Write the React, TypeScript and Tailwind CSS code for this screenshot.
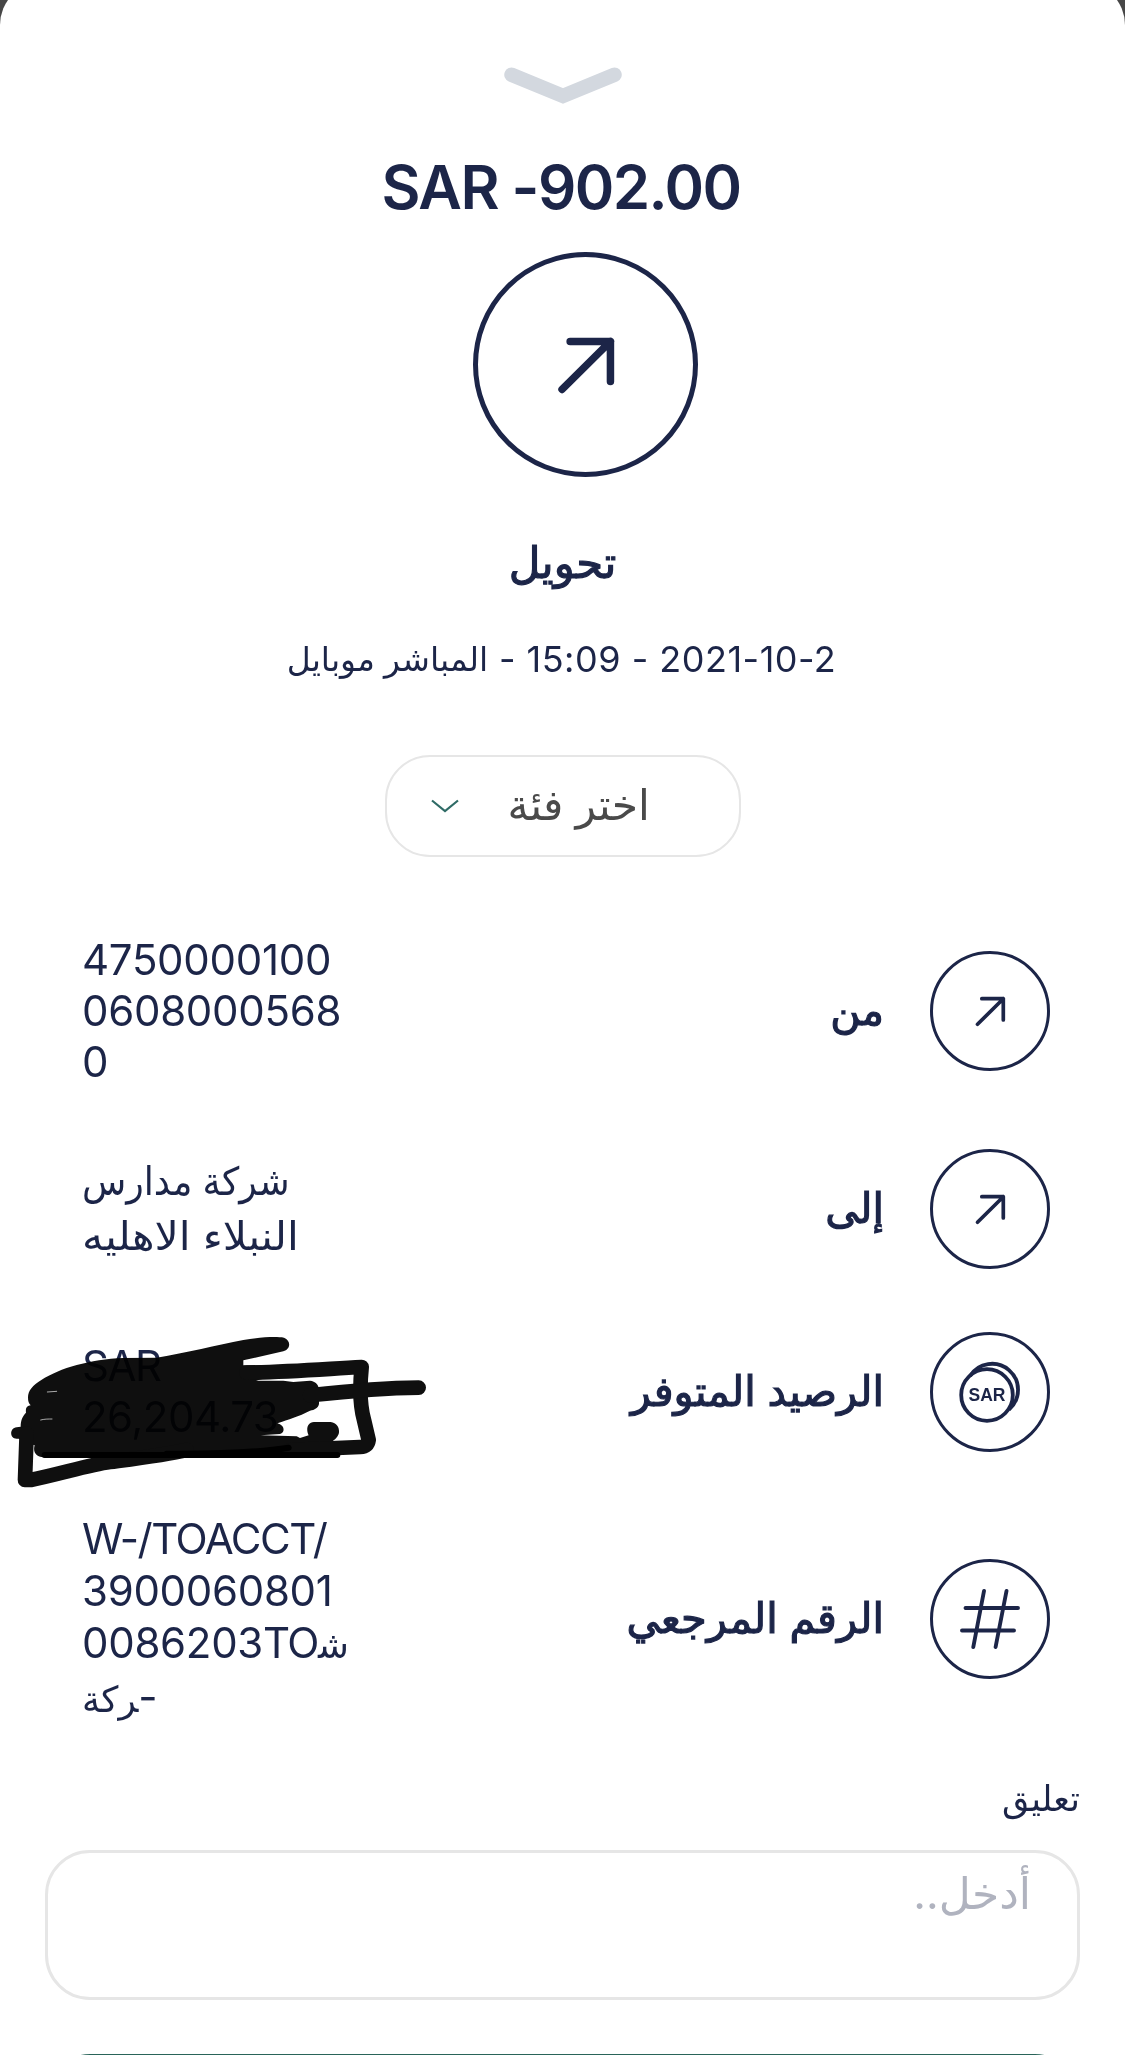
import type { ReactNode } from 'react';

function ArrowUpRight({ className, strokeWidth }: { className: string; strokeWidth: number }) {
  return (
    <svg
      className={className}
      viewBox="0 0 120 120"
      fill="none"
      stroke="currentColor"
      strokeWidth={strokeWidth}
      strokeLinecap="round"
      strokeLinejoin="round"
    >
      <path d="M47.500 73.300 73.300 47.700M51.800 47.700H73.300V69" />
    </svg>
  );
}

function CoinsIcon() {
  return (
    <svg className="size-[120px] shrink-0" viewBox="0 0 120 120" fill="none" stroke="currentColor" strokeWidth="3.8">
      <circle cx="57" cy="63" r="25.800" />
      <path d="M40 44A26 26 0 1 1 79 77.500" />
      <text
        x="57"
        y="69"
        textAnchor="middle"
        fill="currentColor"
        stroke="none"
        className="font-['Liberation_Sans'] text-[17.5px] font-bold"
      >
        SAR
      </text>
    </svg>
  );
}

function HashIcon() {
  return (
    <svg
      className="size-[120px] shrink-0"
      viewBox="0 0 120 120"
      fill="none"
      stroke="currentColor"
      strokeWidth="3.9"
      strokeLinecap="round"
    >
      <path d="M54 32 43.300 88M76.500 32 65.600 88M35.500 49H88M32 71.500H84" />
    </svg>
  );
}

// Pen strokes drawn over the balance
function Scribble() {
  return (
    <svg
      className="absolute top-[-12px] left-0 h-[180px] w-[450px]"
      viewBox="0 0 1350 540"
      fill="none"
      stroke="#0f0f0f"
      strokeWidth="44"
      strokeLinecap="round"
      strokeLinejoin="round"
    >
      <path
        fill="#0f0f0f"
        stroke="none"
        d="M84 232C84 212 98 196 124 180C180 144 270 118 370 114L470 113C560 98 650 76 730 60C790 50 830 50 852 53C874 62 872 88 850 94L730 121V136L940 134L768 182H850L880 186L930 182C946 184 956 192 957 210V252C954 264 944 270 930 272C896 290 866 298 832 310C852 314 858 336 840 342L782 346L890 349L900 354L926 346C918 330 920 308 942 306H992C1014 308 1020 330 1016 342C1012 352 1006 358 1000 361V390L560 412L300 412H130C108 410 98 396 104 376L98 374L56 356H50C28 356 28 324 50 322L62 320C62 300 68 288 78 278C76 262 82 258 92 256C86 250 84 244 84 232Z"
      />
      <path d="M740 158C860 156 960 148 1085 141C1080 190 1078 250 1092 300L1106 360C1104 374 1096 380 1080 381L870 390" />
      <path d="M930 226C1040 214 1140 204 1256 203" />
      <path d="M80 340 75 480H92C180 462 270 434 330 426C420 414 500 404 560 390" />
      <path stroke="#000" strokeWidth="18" d="M134 405H1012M500 401C620 402 760 400 866 383" />
      <path stroke="#aaa" strokeWidth="3" d="M142 216 170 214M122 300C132 297 144 297 156 297" />
    </svg>
  );
}

interface DetailRowProps {
  icon: ReactNode;
  label: string;
  className: string;
  children: ReactNode;
}

function DetailRow({ icon, label, className, children }: DetailRowProps) {
  return (
    <div className={`relative flex shrink-0 items-center justify-between pr-[75px] pl-[82px] ${className}`}>
      {children}
      <div className="flex items-center gap-[46px]">
        <span
          dir="rtl"
          className="pb-[2px] text-[41.5px] leading-[60px] whitespace-nowrap [-webkit-text-stroke:1.2px_currentColor]"
        >
          {label}
        </span>
        <span className="flex size-[120px] items-center justify-center rounded-full border-[3px] border-[#1c2548]">
          {icon}
        </span>
      </div>
    </div>
  );
}

export default function App() {
  return (
    <div className="h-[2055px] w-[1125px] overflow-hidden bg-[#474747] font-['Inter','DejaVu_Sans',sans-serif] text-[#1c2548]">
      <div className="-mt-[18px] flex h-[2073px] flex-col rounded-t-[43px] bg-white">
        {/* Header */}
        <header className="flex flex-col items-center pt-[85px]">
          <svg className="h-[38px] w-[118px]" viewBox="0 0 118 38" fill="none" stroke="#d3d8df" strokeWidth="14.5" strokeLinecap="round">
            <path d="M7.500 7.800 59 29 110.500 7.800" />
          </svg>
          <h1 className="mt-[46px] mr-[3px] text-[60px] leading-[72px] font-semibold tracking-[-1.55px] whitespace-nowrap">
            SAR -902.00
          </h1>
          <div className="mt-[29px] ml-[46px] flex size-[225px] items-center justify-center rounded-full border-[5px] border-[#1c2548]">
            <ArrowUpRight className="size-[225px] shrink-0" strokeWidth={4} />
          </div>
          <h2 dir="rtl" className="mt-[55px] text-[43.5px] leading-[60px] [-webkit-text-stroke:1.2px_currentColor]">
            تحويل
          </h2>
          <p dir="ltr" className="mt-[37px] mr-[2px] flex items-center text-[36px] leading-[60px] whitespace-pre">
            <span dir="rtl" className="text-[33px]">المباشر موبايل</span>
            <span className="tracking-[0.5px]"> - 15:09 - 2021-10-2</span>
          </p>
          <button className="mt-[66px] flex h-[102px] w-[356px] items-center rounded-[45px] border-2 border-[#e6e6e6] pl-[44px] text-[#4a4a4a]">
            <svg className="h-[14px] w-[29px]" viewBox="0 0 29 14" fill="none" stroke="#2f6b66" strokeWidth="2.200">
              <path d="M1 1.500 14 12 27 1.500" />
            </svg>
            <span dir="rtl" className="ml-[48px] pb-[2px] text-[42.5px] leading-[60px] whitespace-nowrap">اختر فئة</span>
          </button>
        </header>

        {/* Transfer details */}
        <section className="mt-[77px] flex flex-col">
          <DetailRow icon={<ArrowUpRight className="size-[120px] shrink-0" strokeWidth={3.7} />} label="من" className="h-[153px]">
            <p className="w-[270px] text-[42px] leading-[51px] tracking-[-0.3px] break-all">47500001000608000568 0</p>
          </DetailRow>
          <DetailRow icon={<ArrowUpRight className="size-[120px] shrink-0" strokeWidth={3.7} />} label="إلى" className="mt-[62px] h-[120px]">
            <p dir="rtl" className="flex flex-col items-end pb-[2px] text-[39px] leading-[55px] whitespace-nowrap">
              <span className="origin-left scale-x-[0.93]">شركة مدارس</span>
              <span className="origin-left scale-x-[1.095]">النبلاء الاهليه</span>
            </p>
          </DetailRow>
          <DetailRow icon={<CoinsIcon />} label="الرصيد المتوفر" className="mt-[63px] h-[120px]">
            <Scribble />
            <p className="pb-[2px] text-[42px] leading-[51px] mix-blend-multiply">
              <span className="tracking-[-1.5px]">SAR</span>
              <br />
              <span className="tracking-[-0.5px]">26,204.73</span>
            </p>
          </DetailRow>
          <DetailRow icon={<HashIcon />} label="الرقم المرجعي" className="mt-[62px] h-[210px]">
            <p dir="ltr" className="text-[42px] leading-[52px] tracking-[-0.3px] whitespace-nowrap">
              <span className="tracking-[-1.5px]">W-/TOACCT/</span>
              <br />
              3900060801
              <br />
              0086203<span className="tracking-[-1.5px]">TO</span>
              <span className="text-[37px] tracking-normal">ش&zwj;</span>
              <br />
              <span className="text-[36px] tracking-normal">&zwj;ركة</span>&lrm;-
            </p>
          </DetailRow>
        </section>

        {/* Comment */}
        <section dir="rtl" className="mt-[44px] flex flex-col px-[45px]">
          <label className="text-[35px] leading-[60px]">تعليق</label>
          <div className="mt-[22px] h-[150px] rounded-[45px] border-[3px] border-[#e6e6e6] px-[46px] pt-[10px] text-[44px] leading-[60px] text-[#b0b3bf]">
            أدخل..
          </div>
        </section>
        <div className="mx-[45px] mt-[54px] h-[90px] shrink-0 rounded-t-[45px] bg-[#2a6459]" />
      </div>
    </div>
  );
}
